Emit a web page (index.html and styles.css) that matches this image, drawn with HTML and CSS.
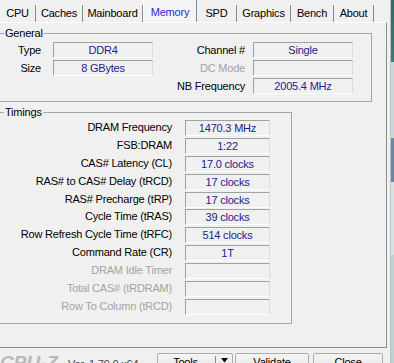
FILE: index.html
```html
<!DOCTYPE html>
<html>
<head>
<meta charset="utf-8">
<link rel="stylesheet" href="styles.css">
</head>
<body>
<div class="screen">
  <div class="window">
    <div class="tabs">
      <div class="tab">CPU</div>
      <div class="tab">Caches</div>
      <div class="tab">Mainboard</div>
      <div class="tab tab-active">Memory</div>
      <div class="tab">SPD</div>
      <div class="tab">Graphics</div>
      <div class="tab">Bench</div>
      <div class="tab">About</div>
    </div>
    <div class="panel">
      <fieldset class="group group-general">
        <legend>General</legend>
        <div class="general-grid">
          <div class="lbl lbl-a r1">Type</div>
          <div class="field fa r1">DDR4</div>
          <div class="lbl lbl-b r1">Channel #</div>
          <div class="field fb r1">Single</div>
          <div class="lbl lbl-a r2">Size</div>
          <div class="field fa r2">8 GBytes</div>
          <div class="lbl lbl-b r2 dis">DC Mode</div>
          <div class="field fb r2"></div>
          <div class="lbl lbl-b r3">NB Frequency</div>
          <div class="field fb r3">2005.4 MHz</div>
        </div>
      </fieldset>
      <fieldset class="group group-timings">
        <legend>Timings</legend>
        <div class="timings-grid">
          <div class="tlbl">DRAM Frequency</div><div class="field">1470.3 MHz</div>
          <div class="tlbl">FSB:DRAM</div><div class="field">1:22</div>
          <div class="tlbl">CAS# Latency (CL)</div><div class="field">17.0 clocks</div>
          <div class="tlbl">RAS# to CAS# Delay (tRCD)</div><div class="field">17 clocks</div>
          <div class="tlbl">RAS# Precharge (tRP)</div><div class="field">17 clocks</div>
          <div class="tlbl">Cycle Time (tRAS)</div><div class="field">39 clocks</div>
          <div class="tlbl">Row Refresh Cycle Time (tRFC)</div><div class="field">514 clocks</div>
          <div class="tlbl">Command Rate (CR)</div><div class="field">1T</div>
          <div class="tlbl dis">DRAM Idle Timer</div><div class="field"></div>
          <div class="tlbl dis">Total CAS# (tRDRAM)</div><div class="field"></div>
          <div class="tlbl dis">Row To Column (tRCD)</div><div class="field"></div>
        </div>
      </fieldset>
    </div>
    <div class="footer">
      <div class="logo">CPU-Z</div>
      <div class="version">Ver. 1.79.0.x64</div>
      <div class="btn btn-tools">
        <span class="btn-label">Tools</span>
        <span class="btn-drop"><svg width="7" height="5" viewBox="0 0 7 5"><path d="M0 0H7L3.5 4.5Z" fill="#000"/></svg></span>
      </div>
      <div class="btn btn-validate"><span class="btn-label">Validate</span></div>
      <div class="btn btn-close"><span class="btn-label">Close</span></div>
    </div>
  </div>
  <div class="desktop"></div>
</div>
</body>
</html>
```

FILE: styles.css
```css
* { box-sizing: border-box; }
html, body { margin: 0; padding: 0; }
body {
  width: 394px;
  height: 363px;
  overflow: hidden;
  background: #f0f0f0;
  font-family: "Liberation Sans", Arial, sans-serif;
  font-size: 11px;
  letter-spacing: -0.2px;
  color: #000;
}
.screen { display: flex; width: 394px; height: 363px; overflow: hidden; }
.window { width: 390px; flex: none; display: flex; flex-direction: column; }
.window > * { flex: none; }
.desktop {
  flex: 1;
  border-left: 1px solid #b8c4c4;
  background: linear-gradient(#2f6b6b 0, #3b7b78 62px, #c9d9d9 62px, #c9d9d9 138px, #6d87a6 138px, #6d87a6 182px, #d6e2e2 182px, #d6e2e2 255px, #bcd3d3 255px);
}

/* tabs */
.tabs { height: 22px; display: flex; align-items: flex-end; }
.tab {
  height: 17px;
  line-height: 16px;
  text-align: center;
  border-right: 1px solid #8c8c8c;
  white-space: nowrap;
}
.tab:nth-child(1) { width: 36px; }
.tab:nth-child(2) { width: 47px; }
.tab:nth-child(3) { width: 60px; }
.tab:nth-child(4) { width: 54px; }
.tab:nth-child(5) { width: 40px; }
.tab:nth-child(6) { width: 54px; }
.tab:nth-child(7) { width: 43px; }
.tab:nth-child(8) { width: 40px; }
.tab-active {
  height: 22px;
  line-height: 22px;
  padding-top: 1px;
  color: #2a2ad0;
  background: #f4f4f4;
  border-left: 1px solid #ffffff;
}

/* panel */
.panel {
  width: 387px;
  height: 326px;
  border-top: 1px solid #ffffff;
  border-right: 1px solid #8c8c8c;
  border-bottom: 1px solid #8c8c8c;
  padding-top: 4px;
}
.group {
  margin: 0 0 0 -1px;
  padding: 0;
  border: 1px solid #a6a6a6;
  min-width: 0;
}
.group legend {
  padding: 0 1px;
  margin-left: 4px;
  line-height: 13px;
  font-size: 11px;
}
.group-general { width: 373px; padding-bottom: 7px; }
.group-timings { width: 293px; margin-top: 4px; padding-bottom: 8px; }

.general-grid {
  display: grid;
  grid-template-columns: 53px 100px 100px 100px;
  grid-template-rows: 16px 16px 16px;
  row-gap: 2px;
  margin-top: 2px;
}
.r1 { grid-row: 1; }
.r2 { grid-row: 2; }
.r3 { grid-row: 3; }
.lbl { line-height: 16px; text-align: right; white-space: nowrap; }
.lbl-a { grid-column: 1; padding-right: 12px; }
.lbl-b { grid-column: 3; padding-right: 8px; }
.fa { grid-column: 2; }
.fb { grid-column: 4; }
.dis { color: #a3a3a3; }

.field {
  background: #f0f0f0;
  border-top: 1px solid #a0a0a0;
  border-left: 1px solid #a0a0a0;
  border-right: 1px solid #dcdcdc;
  border-bottom: 1px solid #ffffff;
  color: #1c1c8a;
  text-align: center;
  line-height: 14px;
  white-space: nowrap;
  overflow: hidden;
}

.timings-grid {
  display: grid;
  grid-template-columns: 172px 85px;
  column-gap: 13px;
  grid-auto-rows: 16px;
  row-gap: 1.9px;
  margin-top: 1px;
}
.tlbl { text-align: right; line-height: 15px; white-space: nowrap; }

/* footer */
.footer {
  display: flex;
  align-items: flex-start;
  padding-top: 5px;
  height: 37px;
}
.logo {
  width: 68px;
  flex: none;
  font-size: 19px;
  line-height: 19px;
  font-weight: bold;
  font-style: italic;
  color: #b8b8b8;
  letter-spacing: 0;
}
.version {
  width: 89px;
  flex: none;
  margin-top: 5px;
  line-height: 13px;
  color: #444;
}
.btn {
  display: flex;
  height: 22px;
  border: 1px solid #acacac;
  border-radius: 2px;
  background: linear-gradient(#f4f4f4, #ececec 50%, #dddddd 50%, #d4d4d4);
  flex: none;
}
.btn-label { flex: 1; text-align: center; line-height: 14px; padding-top: 1px; }
.btn-tools { width: 76px; }
.btn-tools .btn-label { padding-right: 2px; }
.btn-drop {
  width: 17px;
  flex: none;
  border-left: 1px solid #8c8c8c;
  margin-top: 2px;
  display: flex;
  justify-content: center;
  padding-top: 2px;
}
.btn-drop svg { display: block; }
.btn-validate { width: 74px; margin-left: 2px; }
.btn-close { width: 70px; margin-left: 4px; }
```
